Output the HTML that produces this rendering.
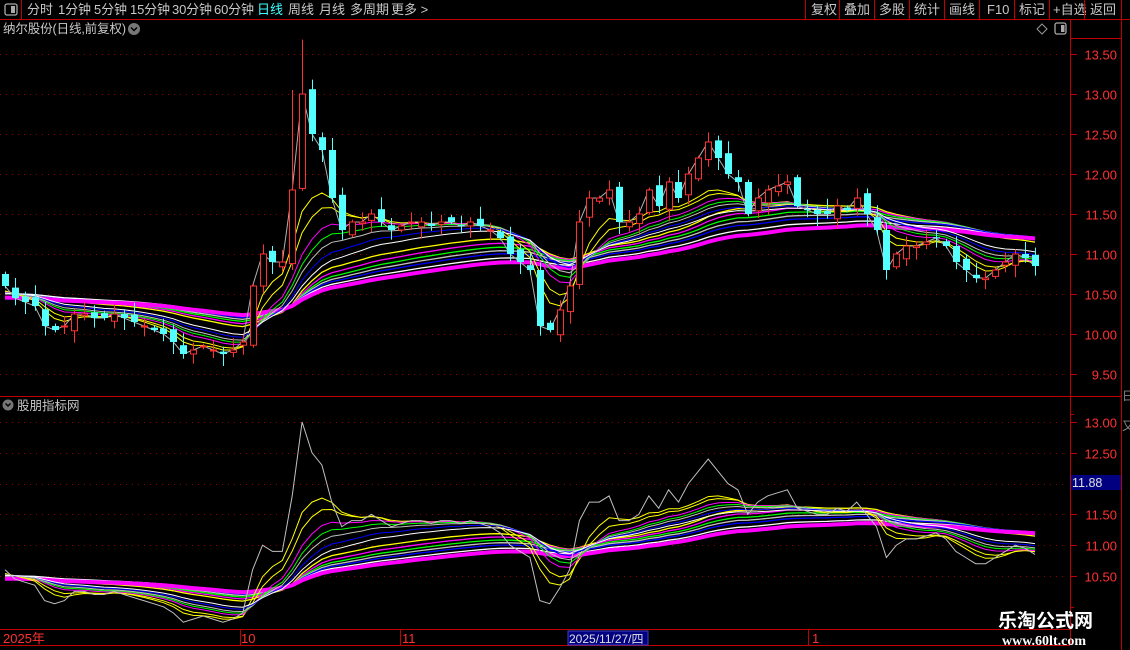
<!DOCTYPE html>
<html><head><meta charset="utf-8"><style>
html,body{margin:0;padding:0;background:#000;width:1130px;height:650px;overflow:hidden;font-family:"Liberation Sans","Noto Sans CJK SC",sans-serif}
svg{display:block}
</style></head><body>
<svg id="s" width="1130" height="650" xmlns="http://www.w3.org/2000/svg" font-family="Liberation Sans, Noto Sans CJK SC, sans-serif">
<rect width="1130" height="650" fill="#000"/>
<line x1="0" y1="19.5" x2="1130" y2="19.5" stroke="#c00000"/>
<line x1="21.5" y1="0" x2="21.5" y2="19" stroke="#c00000"/>
<rect x="5" y="4" width="12" height="11" rx="2" fill="none" stroke="#aaa" stroke-width="1.3"/>
<rect x="11" y="6" width="4" height="7" fill="#aaa"/>
<g font-size="13" fill="#c8c8c8">
<text x="27" y="14">分时</text><text x="58" y="14" textLength="33">1分钟</text><text x="94" y="14" textLength="33">5分钟</text>
<text x="130" y="14" textLength="40">15分钟</text><text x="172" y="14" textLength="40">30分钟</text><text x="214" y="14" textLength="40">60分钟</text>
<text x="257" y="14" fill="#40ffff">日线</text><text x="288" y="14">周线</text><text x="319" y="14">月线</text>
<text x="350" y="14">多周期</text><text x="391" y="14">更多 &gt;</text>
<text x="811" y="14">复权</text><text x="844" y="14">叠加</text><text x="879" y="14">多股</text>
<text x="914" y="14">统计</text><text x="949" y="14">画线</text><text x="987" y="14">F10</text>
<text x="1019" y="14">标记</text><text x="1053" y="14">+自选</text><text x="1090" y="14">返回</text>
</g>
<g stroke="#c00000">
<line x1="805.5" y1="0" x2="805.5" y2="19"/><line x1="839.5" y1="0" x2="839.5" y2="19"/><line x1="874.5" y1="0" x2="874.5" y2="19"/>
<line x1="909.5" y1="0" x2="909.5" y2="19"/><line x1="944.5" y1="0" x2="944.5" y2="19"/><line x1="979.5" y1="0" x2="979.5" y2="19"/>
<line x1="1014.5" y1="0" x2="1014.5" y2="19"/><line x1="1049.5" y1="0" x2="1049.5" y2="19"/><line x1="1084.5" y1="0" x2="1084.5" y2="19"/>
<line x1="1121.5" y1="0" x2="1121.5" y2="19"/>
</g>
<text x="3" y="33" font-size="12.5" fill="#c8c8c8" textLength="123">纳尔股份(日线,前复权)</text>
<circle cx="134" cy="29" r="6" fill="#777"/><path d="M131 27.5 L134 30.5 L137 27.5" stroke="#000" stroke-width="1.5" fill="none"/>
<path d="M1042 24 L1047 29 L1042 34 L1037 29 Z" fill="none" stroke="#999"/>
<rect x="1055" y="23" width="11" height="11" rx="2" fill="none" stroke="#aaa" stroke-width="1.3"/><rect x="1061" y="25" width="3.5" height="7" fill="#aaa"/>
<g stroke="#c00000" fill="none">
<line x1="1070.5" y1="20" x2="1070.5" y2="645"/>
<line x1="1121.5" y1="20" x2="1121.5" y2="650"/>
<line x1="0" y1="396.5" x2="1121" y2="396.5"/>
<line x1="0" y1="629.5" x2="1070" y2="629.5"/>
<line x1="0" y1="645.5" x2="1070" y2="645.5"/>
<line x1="1070" y1="38.5" x2="1121" y2="38.5"/>
</g>
<g id="grid"></g>
<g id="plot"></g>
<circle cx="8" cy="405" r="5.5" fill="#777"/><path d="M5.5 403.5 L8 406 L10.5 403.5" stroke="#000" stroke-width="1.5" fill="none"/>
<text x="17" y="410" font-size="12.5" fill="#c8c8c8">股朋指标网</text>
<rect x="1071" y="475" width="50" height="15" fill="#000080"/>
<text x="1072" y="487" font-size="12.5" fill="#e0e0e0">11.88</text>
<g font-size="13" fill="#ff3030">
<text x="3" y="643">2025年</text><text x="241" y="643">10</text><text x="402" y="643">11</text>
</g>
<rect x="568" y="631" width="80" height="14" fill="#000080" stroke="#4040c0"/>
<text x="569" y="643" font-size="12" fill="#e0e0e0">2025/11/27/四</text>
<g stroke="#c00000">
<line x1="240.5" y1="630" x2="240.5" y2="645"/><line x1="400.5" y1="630" x2="400.5" y2="645"/><line x1="808.5" y1="630" x2="808.5" y2="645"/>
</g>
<text x="812" y="643" font-size="13" fill="#ff3030">1</text>
<g fill="#888" font-size="12"><text x="1122" y="400">日</text><text x="1122" y="430">又</text></g>
<text x="998" y="627" font-size="19" font-weight="bold" fill="#fff" font-family="Noto Sans CJK SC, sans-serif">乐淘公式网</text>
<text x="1002" y="645" font-size="14" font-weight="bold" fill="#fff" font-family="Liberation Serif, serif">www.60lt.com</text>
</svg>
<script>
var C=[10.6,10.45,10.4,10.35,10.1,10.05,10.1,10.25,10.25,10.2,10.2,10.25,10.2,10.15,10.1,10.05,10.0,9.9,9.75,9.8,9.85,9.8,9.75,9.8,9.9,10.6,11.0,10.9,10.9,11.8,13.0,12.5,12.3,11.7,11.3,11.4,11.4,11.5,11.4,11.3,11.35,11.4,11.4,11.35,11.4,11.4,11.35,11.4,11.35,11.3,11.2,11.0,10.9,10.8,10.1,10.05,10.3,10.6,11.4,11.7,11.7,11.8,11.4,11.4,11.5,11.8,11.6,11.9,11.7,12.0,12.2,12.4,12.2,12.0,11.9,11.5,11.7,11.8,11.85,11.9,11.6,11.55,11.5,11.5,11.6,11.55,11.7,11.5,11.3,10.8,11.0,11.1,11.1,11.15,11.2,11.1,10.9,10.8,10.7,10.7,10.8,10.9,11.0,10.95,10.85];
var N=C.length,SP=1030/(N-1),X=function(i){return 5+i*SP};
var ym=function(p){return 54+(13.5-p)*80}, yl=function(p){return 422+(13-p)*61.6};
var ns="http://www.w3.org/2000/svg",g=document.getElementById('plot'),gr=document.getElementById('grid');
function el(t,a,p){var e=document.createElementNS(ns,t);for(var k in a)e.setAttribute(k,a[k]);(p||g).appendChild(e);return e}
[13.5,13,12.5,12,11.5,11,10.5,10,9.5].forEach(function(p){var y=Math.round(ym(p))+.5;
el('line',{x1:0,y1:y,x2:1068,y2:y,stroke:'#900000','stroke-dasharray':'1 5'},gr);
el('line',{x1:1070,y1:y,x2:1077,y2:y,stroke:'#c00000'},gr);
el('line',{x1:1070,y1:y+40,x2:1074,y2:y+40,stroke:'#c00000'},gr);
var t=el('text',{x:1117,y:y+5,'font-size':13,fill:'#ff3030','text-anchor':'end'},gr);t.textContent=p.toFixed(2)});
[13,12.5,12,11.5,11,10.5].forEach(function(p){var y=Math.round(yl(p))+.5;
el('line',{x1:0,y1:y,x2:1068,y2:y,stroke:'#900000','stroke-dasharray':'1 5'},gr);
el('line',{x1:1070,y1:y,x2:1077,y2:y,stroke:'#c00000'},gr);
if(p!=12)el('line',{x1:1070,y1:y+31,x2:1074,y2:y+31,stroke:'#c00000'},gr);
if(p!=12){var t=el('text',{x:1117,y:y+5,'font-size':13,fill:'#ff3030','text-anchor':'end'},gr);t.textContent=p.toFixed(2)}});
var D=C.map(function(v){return v>11.5?11.5+(v-11.5)*0.45:v});
function ema(n,seed,src){var r=[],v=seed,a=2/(n+1);for(var i=0;i<N;i++){v=v+(src[i]-v)*a;r.push(v)}return r}
var S=[[4,'#ffff00'],[6,'#ffff00'],[9,'#ff00ff'],[11,'#00ff00'],[13,'#c0c0c0'],[16,'#0000ff'],[19,'#ffffff']];
var L=[[30,'#ffff00'],[35,'#ff00ff'],[40,'#00ff00'],[45,'#c0c0c0'],[50,'#0000ff'],[58,'#ffffff']];
function pl(m,Y,c,w){el('polyline',{points:m.map(function(v,i){return X(i).toFixed(1)+','+Y(v).toFixed(1)}).join(' '),fill:'none',stroke:c,'stroke-width':w})}
function lines(Y){
 L.forEach(function(s){pl(ema(s[0],10.5,C),Y,s[1],1.3)});
 pl(ema(66,10.45,C),Y,'#ff00ff',4);
 S.forEach(function(s){pl(ema(s[0],10.5,D),Y,s[1],1)});
}
lines(ym);
pl(C,ym,'#b0b0b0',1);
for(var i=0;i<N;i++){var o=i?C[i-1]+((i*37)%7-3)*0.02:10.75,c=C[i];
 var hi=Math.max(o,c)+0.03+((i*13)%5)*0.03,lo=Math.min(o,c)-0.03-((i*7)%5)*0.03;
 if(i==30)hi=13.68; if(i==29){hi=13.05;lo=10.8}
 var x=Math.round(X(i)),up=c>=o,col=up?'#ff3232':'#54ffff';
 el('line',{x1:x+.5,y1:ym(hi),x2:x+.5,y2:ym(lo),stroke:col});
 var t=ym(Math.max(o,c)),h=Math.max(1,ym(Math.min(o,c))-t);
 if(up)el('rect',{x:x-2.5,y:t,width:6,height:h,fill:'#000',stroke:col});
 else el('rect',{x:x-3,y:t,width:7,height:h,fill:col});
}
lines(yl);
pl(C,yl,'#c0c0c0',1);
</script>
</body></html>
